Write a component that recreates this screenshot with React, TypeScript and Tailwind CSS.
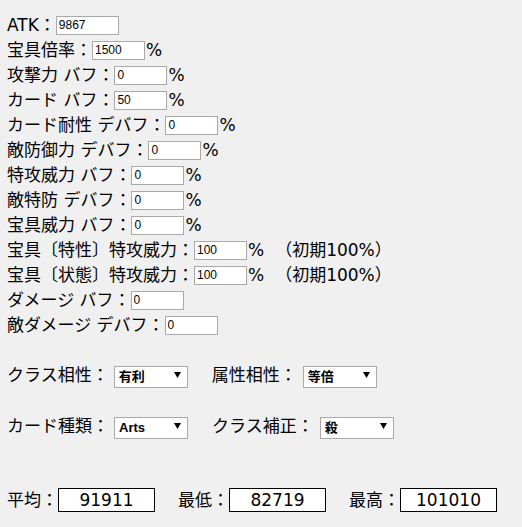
import { useState } from 'react';

interface Row {
  label: string;
  value: string;
  wide?: boolean;
  percent?: boolean;
  note?: boolean;
}

const rows: Row[] = [
  { label: 'ATK：', value: '9867', wide: true },
  { label: '宝具倍率：', value: '1500', percent: true },
  { label: '攻撃力 バフ：', value: '0', percent: true },
  { label: 'カード バフ：', value: '50', percent: true },
  { label: 'カード耐性 デバフ：', value: '0', percent: true },
  { label: '敵防御力 デバフ：', value: '0', percent: true },
  { label: '特攻威力 バフ：', value: '0', percent: true },
  { label: '敵特防 デバフ：', value: '0', percent: true },
  { label: '宝具威力 バフ：', value: '0', percent: true },
  { label: '宝具〔特性〕特攻威力：', value: '100', percent: true, note: true },
  { label: '宝具〔状態〕特攻威力：', value: '100', percent: true, note: true },
  { label: 'ダメージ バフ：', value: '0' },
  { label: '敵ダメージ デバフ：', value: '0' },
];

function Select({ options, value }: { options: string[]; value: string }) {
  const [v, setV] = useState(value);
  return (
    <div className="relative w-[74px] h-[22px]">
      <select
        value={v}
        onChange={(e) => setV(e.target.value)}
        className="appearance-none w-full h-full border border-[#a9a9a9] bg-white pl-[4px] text-[13px] leading-[20px] font-bold text-black font-['Liberation_Sans','Noto_Sans_CJK_JP',sans-serif] outline-none"
      >
        {options.map((o) => (
          <option key={o}>{o}</option>
        ))}
      </select>
      {/* dropdown arrow */}
      <svg className="absolute right-[7px] top-[8px] pointer-events-none" width="7" height="6" viewBox="0 0 7 6">
        <path d="M0 0 H7 L3.5 6 Z" fill="#000" />
      </svg>
    </div>
  );
}

function Result({ label, value }: { label: string; value: string }) {
  return (
    <div className="flex items-center h-[24px]">
      <span className="leading-[24px]">{label}</span>
      <div className="w-[97px] h-[24px] border border-black bg-white flex items-center justify-center text-[17px] leading-[22px]">
        {value}
      </div>
    </div>
  );
}

export default function App() {
  return (
    <div className="min-h-screen bg-[#f0f0f0] text-black text-[17px] font-['DejaVu_Sans','Noto_Sans_CJK_JP',sans-serif] pt-[13px] pl-[7px]">
      {/* Inputs */}
      {rows.map((r) => (
        <div key={r.label} className="flex items-center h-[25px] leading-[25px] whitespace-pre">
          <span>{r.label}</span>
          <input
            defaultValue={r.value}
            className={`${r.wide ? 'w-[63px]' : 'w-[53px]'} h-[19px] border border-[#a9a9a9] bg-white pl-[2px] text-[12px] text-black font-['Liberation_Sans',sans-serif] outline-none`}
          />
          {r.percent && <span className="ml-[1px]">%</span>}
          {r.note && <span className="ml-[11px]">（初期100%）</span>}
        </div>
      ))}

      {/* Selects */}
      <div className="flex items-center h-[22px] leading-[22px] mt-[26px]">
        <span className="mr-[5px]">クラス相性：</span>
        <Select options={['有利', '等倍', '不利']} value="有利" />
        <span className="ml-[24px] mr-[6px]">属性相性：</span>
        <Select options={['有利', '等倍', '不利']} value="等倍" />
      </div>
      <div className="flex items-center h-[22px] leading-[22px] mt-[29px]">
        <span className="mr-[5px]">カード種類：</span>
        <Select options={['Buster', 'Arts', 'Quick']} value="Arts" />
        <span className="ml-[24px] mr-[6px]">クラス補正：</span>
        <Select options={['剣', '弓', '槍', '騎', '術', '殺', '狂']} value="殺" />
      </div>

      {/* Results */}
      <div className="flex items-center gap-[23px] mt-[51px]">
        <Result label="平均：" value="91911" />
        <Result label="最低：" value="82719" />
        <Result label="最高：" value="101010" />
      </div>
    </div>
  );
}
